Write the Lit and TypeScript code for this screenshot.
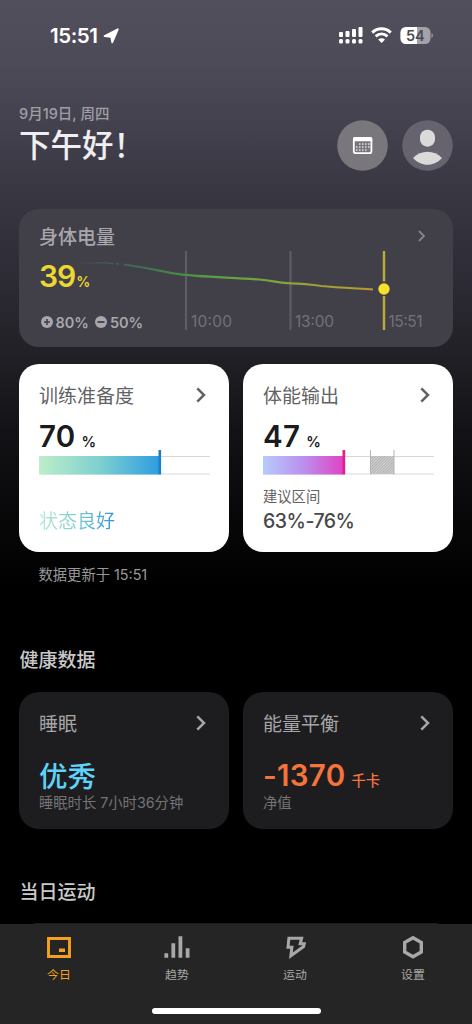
import { LitElement, html, svg, css } from "lit";
import { customElement } from "lit/decorators.js";

const chevron = (color: string, size = 1) => html`
  <svg width=${10 * size} height=${16 * size} viewBox="0 0 10 16" fill="none" stroke=${color} stroke-width="2.5">
    <path d="M1.300 1.300 8 8l-6.700 6.700" />
  </svg>`;

@customElement("app-root")
export class AppRoot extends LitElement {
  static styles = css`
    :host {
      display: block;
      width: 472px;
      height: 1024px;
      overflow: hidden;
      font-family: Inter, "Noto Sans CJK SC", sans-serif;
      color: #fff;
      background: #000;
    }
    svg { display: block; flex: none; }
    .page {
      height: 1024px;
      box-sizing: border-box;
      display: flex;
      flex-direction: column;
      background: linear-gradient(#524f5d 0, #4e4b59 60px, #393742 190px, #2e2c36 270px, #222127 350px, #131216 430px, #060607 530px, #000 595px);
    }
    .status {
      height: 71px;
      flex: none;
      display: flex;
      align-items: center;
      justify-content: space-between;
      padding: 0 39px 0 50px;
    }
    .clock { display: flex; align-items: center; gap: 6px; font-size: 20.500px; font-weight: 600; letter-spacing: -0.45px; line-height: 24px; }
    .signals { display: flex; align-items: center; }
    .header {
      height: 138px;
      flex: none;
      box-sizing: border-box;
      display: flex;
      justify-content: space-between;
      padding: 33px 19px 0 19px;
    }
    .date { font-size: 14.500px; line-height: 20px; font-weight: 500; color: #a09ea5; white-space: pre; }
    .hello { font-size: 31.500px; line-height: 39px; font-weight: 500; color: #efeef0; font-family: "Noto Sans CJK SC", sans-serif; }
    .actions { display: flex; gap: 14px; padding-top: 16px; }
    .battery {
      display: grid;
      height: 138px;
      flex: none;
      margin: 0 19px;
      border-radius: 20px;
      background: #413f47;
    }
    .battery > * { grid-area: 1 / 1; }
    .battery text { font-size: 15.500px; fill: #73717a; }
    .body-info { display: flex; flex-direction: column; padding: 15px 28px 0 20px; }
    .row { display: flex; align-items: center; justify-content: space-between; height: 24px; }
    .label { font-size: 19px; line-height: 24px; padding-top: 4px; }
    .battery .label { color: #a9a7ad; font-weight: 500; }
    .charge { display: flex; align-items: baseline; height: 36px; line-height: 36px; margin-top: 10px; color: #edd832; font-size: 30px; font-weight: 600; letter-spacing: -1px; }
    .charge small { font-size: 14px; letter-spacing: 0; margin-left: 1px; }
    .deltas { display: flex; gap: 6.500px; margin-top: 18px; padding-left: 2px; }
    .delta { display: flex; align-items: center; gap: 2.500px; height: 20px; font-size: 14.500px; font-weight: 600; color: #a9a7ad; }
    .pair { display: grid; grid-template-columns: 210px 210px; gap: 14px; padding: 0 19px; flex: none; }
    .scores { margin-top: 17px; }
    .card { box-sizing: border-box; border-radius: 20px; padding: 19px 20px 0; }
    .card .row { padding-right: 3px; }
    .light { height: 188px; background: #fff; color: #1b1b1d; }
    .light .label { color: #626264; }
    .dark { height: 137px; background: #1d1d1f; }
    .dark .label { color: #a6a6a8; }
    .score { display: flex; align-items: baseline; height: 34px; line-height: 34px; margin-top: 12px; font-size: 29.500px; font-weight: 600; letter-spacing: 0.3px; }
    .score small { font-size: 14.500px; margin-left: 6px; font-weight: 600; letter-spacing: 0; }
    .meter { margin-top: -3px; margin-left: -0.5px; }
    .good {
      width: max-content;
      margin-top: 35px;
      font-size: 19px;
      line-height: 24px;
      background: linear-gradient(90deg, #bcebd0, #7ecdd0 50%, #2b94dd);
      background-clip: text;
      -webkit-background-clip: text;
      color: transparent;
    }
    .hint { margin-top: 12px; font-size: 14.300px; line-height: 20px; color: #626264; }
    .range { font-size: 19.500px; line-height: 24px; margin-top: 2px; font-weight: 500; color: #48484a; letter-spacing: -0.5px; }
    .updated { margin: 13px 0 0 38.5px; height: 20px; line-height: 20px; font-size: 14.300px; color: #98989a; flex: none; }
    .section { margin-left: 19.5px; height: 24px; line-height: 24px; font-size: 19px; font-weight: 500; color: #c9c9c9; flex: none; }
    .health { margin-top: 64px; }
    .sports { margin-top: 52px; }
    .facts { margin-top: 19px; }
    .value { display: flex; align-items: baseline; height: 36px; line-height: 36px; margin-top: 24px; font-weight: 600; font-size: 29.500px; }
    .sleep { color: #5fd2fa; font-size: 28.500px; font-weight: 500; }
    .energy { color: #f4743b; letter-spacing: 0.3px; margin-top: 22px; }
    .energy small { font-size: 14.300px; font-weight: 500; margin-left: 6px; letter-spacing: 0; }
    .note { font-size: 14.300px; line-height: 20px; margin-top: -2px; color: #747476; }
    .energy + .note { margin-top: 0; }
    .edge { height: 1px; flex: none; margin: 18px 34px 0; background: #1d1d1f; }
    .tabs {
      height: 100px;
      flex: none;
      box-sizing: border-box;
      background: #252525;
      display: flex;
      flex-direction: column;
      align-items: center;
    }
    .tab-row { display: grid; grid-template-columns: repeat(4, 118px); height: 84px; }
    .tab { display: flex; flex-direction: column; align-items: center; padding-top: 9px; font-size: 11.900px; line-height: 16px; gap: 6.500px; color: #a8a8a8; }
    .active { color: #f6a11d; }
    .home { width: 169px; height: 6px; border-radius: 3px; background: #fff; }
  `;

  private status() {
    return html`
      <div class="status">
        <div class="clock">15:51
          <svg width="17" height="18" viewBox="0 0 17 18" fill="#fff" stroke="#fff" stroke-width="1.800" stroke-linejoin="round"><path d="M14.800 2.300 9.200 15.300 8.200 9.800 1.600 9z" /></svg>
        </div>
        <div class="signals">
          <svg width="94.500" height="20" viewBox="0 0 94.500 20">
            <g fill="#fff">
              <rect y="6" width="4" height="5" rx="1" /><rect x="6.500" y="5" width="4" height="6" rx="1" />
              <rect x="13" y="3" width="4" height="8" rx="1" /><rect x="19.500" y="1" width="4" height="10" rx="1" />
              ${[0, 6.5, 13, 19.5].map((x) => svg`<rect x=${x} y="13" width="4" height="4.500" rx="1.500" />`)}
            </g>
            <g fill="none" stroke="#fff" stroke-width="2.900">
              <path d="M33.200 6.600c5.400-5.100 13.200-5.100 18.600 0M36.700 10.400c3.500-3.200 8.300-3.200 11.800 0" />
            </g>
            <path d="M39.200 13.500c2-1.700 4.800-1.700 6.800 0L42.600 17z" fill="#fff" />
            <rect x="61.500" y="1" width="30" height="17" rx="5.500" fill="#a3a1a9" />
            <path d="M67 1h11v17H67a5.500 5.500 0 0 1-5.500-5.500v-6A5.500 5.500 0 0 1 67 1z" fill="#fff" />
            <path d="M92.500 7a3 3 0 0 1 0 5z" fill="#a3a1a9" />
            <text x="76.300" y="14.600" text-anchor="middle" font-size="14.500" font-weight="600" fill="#4c4a56">54</text>
          </svg>
        </div>
      </div>`;
  }

  private header() {
    return html`
      <div class="header">
        <div>
          <div class="date">9月19日, 周四</div>
          <div class="hello">下午好！</div>
        </div>
        <div class="actions">
          <svg width="51" height="51" viewBox="0 0 51 51">
            <circle cx="25.500" cy="25.500" r="25.300" fill="#79777c" />
            <rect x="16.800" y="18" width="17.600" height="15.200" rx="2" fill="#79777c" stroke="#fff" stroke-width="1.800" />
            <path d="M17.500 17h16.200a1.700 1.700 0 0 1 1.600 1.700v2.600H16v-2.600A1.700 1.700 0 0 1 17.500 17z" fill="#fff" />
            ${[23.8, 26.8, 29.8].map((y, r) =>
              [19, 22, 25, 28, 31].map((x, c) =>
                (r === 0 && c === 0) || (r === 2 && c === 4) ? null : svg`<rect x=${x} y=${y - 0.5} width="1.500" height="1.500" fill="#dedee0" />`))}
          </svg>
          <svg width="51" height="51" viewBox="0 0 51 51">
            <circle cx="25.500" cy="25.500" r="25.300" fill="#66636e" />
            <rect x="18" y="9.700" width="15" height="17" rx="7.300" fill="#dadada" />
            <path d="M11 38c8-8.500 21-8.500 29 0-8 9-21 9-29 0z" fill="#dadada" />
          </svg>
        </div>
      </div>`;
  }

  private battery() {
    return html`
      <div class="battery">
        <svg width="434" height="138" viewBox="0 0 434 138">
          <defs>
            <linearGradient id="trend" gradientUnits="userSpaceOnUse" x1="58" x2="356" y1="0" y2="0">
              <stop offset="0" stop-color="#3c6a60" stop-opacity="0" />
              <stop offset=".12" stop-color="#3c6a60" stop-opacity=".75" />
              <stop offset=".3" stop-color="#43804b" />
              <stop offset=".45" stop-color="#58a044" />
              <stop offset=".65" stop-color="#7ba53b" />
              <stop offset=".85" stop-color="#a5a035" />
              <stop offset="1" stop-color="#c0982e" />
            </linearGradient>
          </defs>
          <path d="M167 42v79M271.500 42v79" stroke="#5d5b65" stroke-width="2.200" />
          <path d="M62 55C75 53.500 87 53.500 94 54.500M97 54.800h3" stroke="url(#trend)" stroke-width="1.500" fill="none" />
          <path d="M105 55.500C125 58 145 63 160 65.200C180 68 215 68.500 240 70.500C255 72 262 74 272 74.300C287 74.500 290 75.500 302 77C320 78.800 340 79.500 354 80.500" stroke="url(#trend)" stroke-width="2.200" fill="none" />
          <path d="M365 42v30.500M365 87v34" stroke="#b7a93b" stroke-width="2.500" />
          <circle cx="365" cy="80" r="5.700" fill="#f8df2b" />
          <text x="172" y="118" textLength="41">10:00</text>
          <text x="276" y="118" textLength="39">13:00</text>
          <text x="369.500" y="118" textLength="34">15:51</text>
        </svg>
        <div class="body-info">
          <div class="row"><span class="label">身体电量</span>${chevron("#85838b", 0.75)}</div>
          <div class="charge">39<small>%</small></div>
          <div class="deltas">
            <span class="delta">
              <svg width="12" height="12" viewBox="0 0 12 12"><circle cx="6" cy="6" r="6" fill="#a9a7ad" /><path d="M3 6h6M6 3v6" stroke="#413f47" stroke-width="1.600" /></svg>80%
            </span>
            <span class="delta">
              <svg width="12" height="12" viewBox="0 0 12 12"><circle cx="6" cy="6" r="6" fill="#a9a7ad" /><path d="M2.500 6h7" stroke="#413f47" stroke-width="1.800" /></svg>50%
            </span>
          </div>
        </div>
      </div>`;
  }

  private scores() {
    return html`
      <div class="pair scores">
        <div class="card light">
          <div class="row"><span class="label">训练准备度</span>${chevron("#626264")}</div>
          <div class="score">70<small>%</small></div>
          <svg class="meter" width="171" height="25" viewBox="0 0 171 25">
            <defs><linearGradient id="ready"><stop stop-color="#bdeeca" /><stop offset=".5" stop-color="#7fd0cf" /><stop offset="1" stop-color="#2f9de0" /></linearGradient></defs>
            <path d="M0 6.500h171M0 24h171" stroke="#d8d8d8" />
            <rect y="6" width="120" height="18.500" fill="url(#ready)" />
            <rect x="119.500" width="2.600" height="24.500" fill="#1c7dcb" />
          </svg>
          <div class="good">状态良好</div>
        </div>
        <div class="card light">
          <div class="row"><span class="label">体能输出</span>${chevron("#626264")}</div>
          <div class="score">47<small>%</small></div>
          <svg class="meter" width="171" height="25" viewBox="0 0 171 25">
            <defs>
              <linearGradient id="output"><stop stop-color="#b5cbfb" /><stop offset=".5" stop-color="#bb90ee" /><stop offset="1" stop-color="#e044c4" /></linearGradient>
              <pattern id="hatch" width="2" height="2" patternUnits="userSpaceOnUse" patternTransform="rotate(45)"><rect width="2" height="2" fill="#d4d4d4" /><rect width="1" height="2" fill="#b0b0b0" /></pattern>
            </defs>
            <path d="M0 6.500h171M0 24h171" stroke="#d8d8d8" />
            <rect y="6" width="80" height="18.500" fill="url(#output)" />
            <rect x="79.500" width="2.700" height="24.500" fill="#e0208f" />
            <rect x="108" y="6" width="23" height="18" fill="url(#hatch)" />
            <path d="M107.500 0v24.500M131 0v24.500" stroke="#b4b4b4" />
          </svg>
          <div class="hint">建议区间</div>
          <div class="range">63%-76%</div>
        </div>
      </div>
      <div class="updated">数据更新于 15:51</div>`;
  }

  private facts() {
    return html`
      <div class="section health">健康数据</div>
      <div class="pair facts">
        <div class="card dark">
          <div class="row"><span class="label">睡眠</span>${chevron("#a6a6a8")}</div>
          <div class="value sleep">优秀</div>
          <div class="note">睡眠时长 7小时36分钟</div>
        </div>
        <div class="card dark">
          <div class="row"><span class="label">能量平衡</span>${chevron("#a6a6a8")}</div>
          <div class="value energy">-1370<small>千卡</small></div>
          <div class="note">净值</div>
        </div>
      </div>
      <div class="section sports">当日运动</div>`;
  }

  private tabs() {
    const items = [
      { name: "今日", icon: svg`<path d="M2.500 3.500h21v18h-21z" fill="none" stroke="currentColor" stroke-width="2.900" /><path d="M13 13.500h6v3.500h-6z" fill="currentColor" />` },
      { name: "趋势", icon: svg`<path d="M2.300 22.800v-4.500M9.300 22.800V8.300M16.400 22.800V1.200M23.600 22.800v-9.500" stroke="currentColor" stroke-width="3.800" />` },
      { name: "运动", icon: svg`<path d="M6.900 3.300h12.700l-1.400 5.500h4l-.6 2.700L8.900 20.700l1-8.400H6z" fill="none" stroke="currentColor" stroke-width="3" />` },
      { name: "设置", icon: svg`<path d="M13 2.700l8.300 4.700v9.700L13 21.800l-8.300-4.700V7.400z" fill="none" stroke="currentColor" stroke-width="3.400" />` },
    ];
    return html`
      <div class="edge"></div>
      <div class="tabs">
        <div class="tab-row">
          ${items.map((t, i) => html`
            <div class="tab ${i === 0 ? "active" : ""}">
              <svg width="26" height="27" viewBox="0 -2 26 27">${t.icon}</svg>
              <span>${t.name}</span>
            </div>`)}
        </div>
        <div class="home"></div>
      </div>`;
  }

  render() {
    return html`<div class="page">
      ${this.status()} ${this.header()} ${this.battery()} ${this.scores()} ${this.facts()} ${this.tabs()}
    </div>`;
  }
}
